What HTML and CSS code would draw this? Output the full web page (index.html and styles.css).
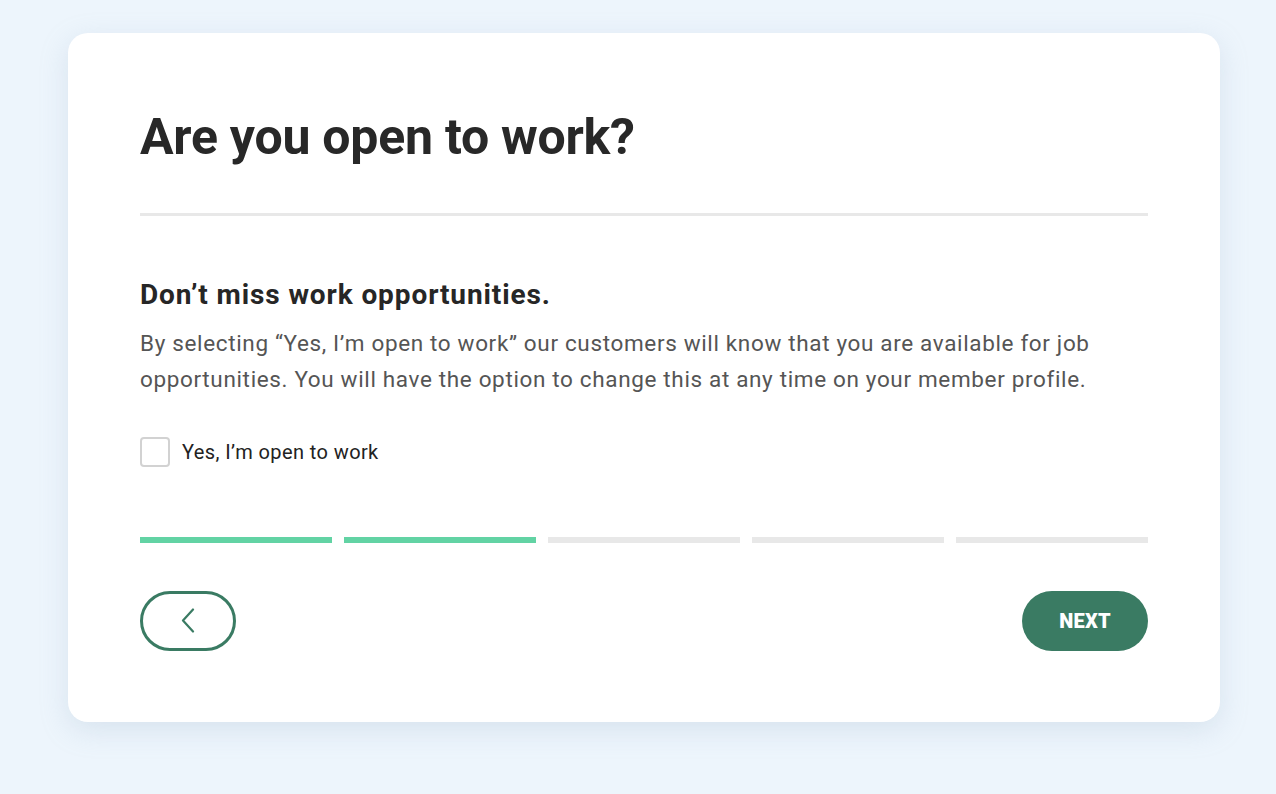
FILE: index.html
```html
<!DOCTYPE html>
<html>
<head>
<meta charset="utf-8">
<link rel="stylesheet" href="styles.css">
</head>
<body>
<main class="page">
  <section class="card">
    <h1 class="title">Are you open to work?</h1>
    <hr class="divider">
    <h2 class="subtitle">Don’t miss work opportunities.</h2>
    <p class="desc">By selecting “Yes, I’m open to work” our customers will know that you are available for job opportunities. You will have the option to change this at any time on your member profile.</p>
    <label class="check">
      <span class="box"></span>
      <span class="check-label">Yes, I’m open to work</span>
    </label>
    <div class="progress">
      <span class="seg done"></span>
      <span class="seg done"></span>
      <span class="seg"></span>
      <span class="seg"></span>
      <span class="seg"></span>
    </div>
    <div class="actions">
      <button class="back" aria-label="Back">
        <svg width="14" height="26" viewBox="0 0 14 26"><path d="M12 1.5 L2 12.5 L12 23.5" fill="none" stroke="#3a7b63" stroke-width="2.2" stroke-linecap="round" stroke-linejoin="round"/></svg>
      </button>
      <button class="next">NEXT</button>
    </div>
  </section>
</main>
</body>
</html>
```
FILE: styles.css
```css
* { box-sizing: border-box; }
html, body { margin: 0; padding: 0; }
body {
  background: #edf5fc;
  font-family: Roboto, "Liberation Sans", sans-serif;
  width: 1276px;
  height: 794px;
  overflow: hidden;
}
.page {
  padding: 33px 56px 0 68px;
}
.card {
  width: 1152px;
  height: 689px;
  background: #fff;
  border-radius: 20px;
  box-shadow: 0 8px 28px rgba(150, 175, 200, 0.25);
  padding: 72px 72px 0 72px;
  display: flex;
  flex-direction: column;
}
.title {
  margin: 0;
  font-size: 50px;
  line-height: 64px;
  font-weight: 700;
  color: #282828;
  letter-spacing: -0.25px;
}
.divider {
  border: 0;
  height: 3px;
  background: #e8e8e8;
  margin: 44px 0 0 0;
}
.subtitle {
  margin: 62px 0 0 0;
  font-size: 28px;
  line-height: 34px;
  font-weight: 700;
  color: #262626;
  letter-spacing: 0.9px;
}
.desc {
  margin: 13px 0 0 0;
  font-size: 22.5px;
  line-height: 36px;
  color: #555;
  letter-spacing: 0.65px;
}
.check {
  display: flex;
  align-items: center;
  gap: 12px;
  margin-top: 40px;
}
.box {
  width: 30px;
  height: 30px;
  border: 2px solid #d2d2d2;
  border-radius: 4px;
}
.check-label {
  font-size: 20px;
  color: #222;
  letter-spacing: 0.4px;
}
.progress {
  display: flex;
  gap: 12px;
  margin-top: 70px;
}
.seg {
  flex: 1;
  height: 6px;
  background: #e8e8e8;
}
.seg.done { background: #62d3a4; }
.actions {
  display: flex;
  justify-content: space-between;
  margin-top: 48px;
}
.back {
  width: 96px;
  height: 60px;
  border: 3px solid #3a7b63;
  border-radius: 30px;
  background: #fff;
  display: flex;
  align-items: center;
  justify-content: center;
  padding: 0;
}
.next {
  width: 126px;
  height: 60px;
  border: 0;
  border-radius: 30px;
  background: #3a7b63;
  color: #fff;
  font-family: Roboto, "Liberation Sans", sans-serif;
  font-weight: 900;
  font-size: 20px;
  letter-spacing: 0.2px;
}
```
